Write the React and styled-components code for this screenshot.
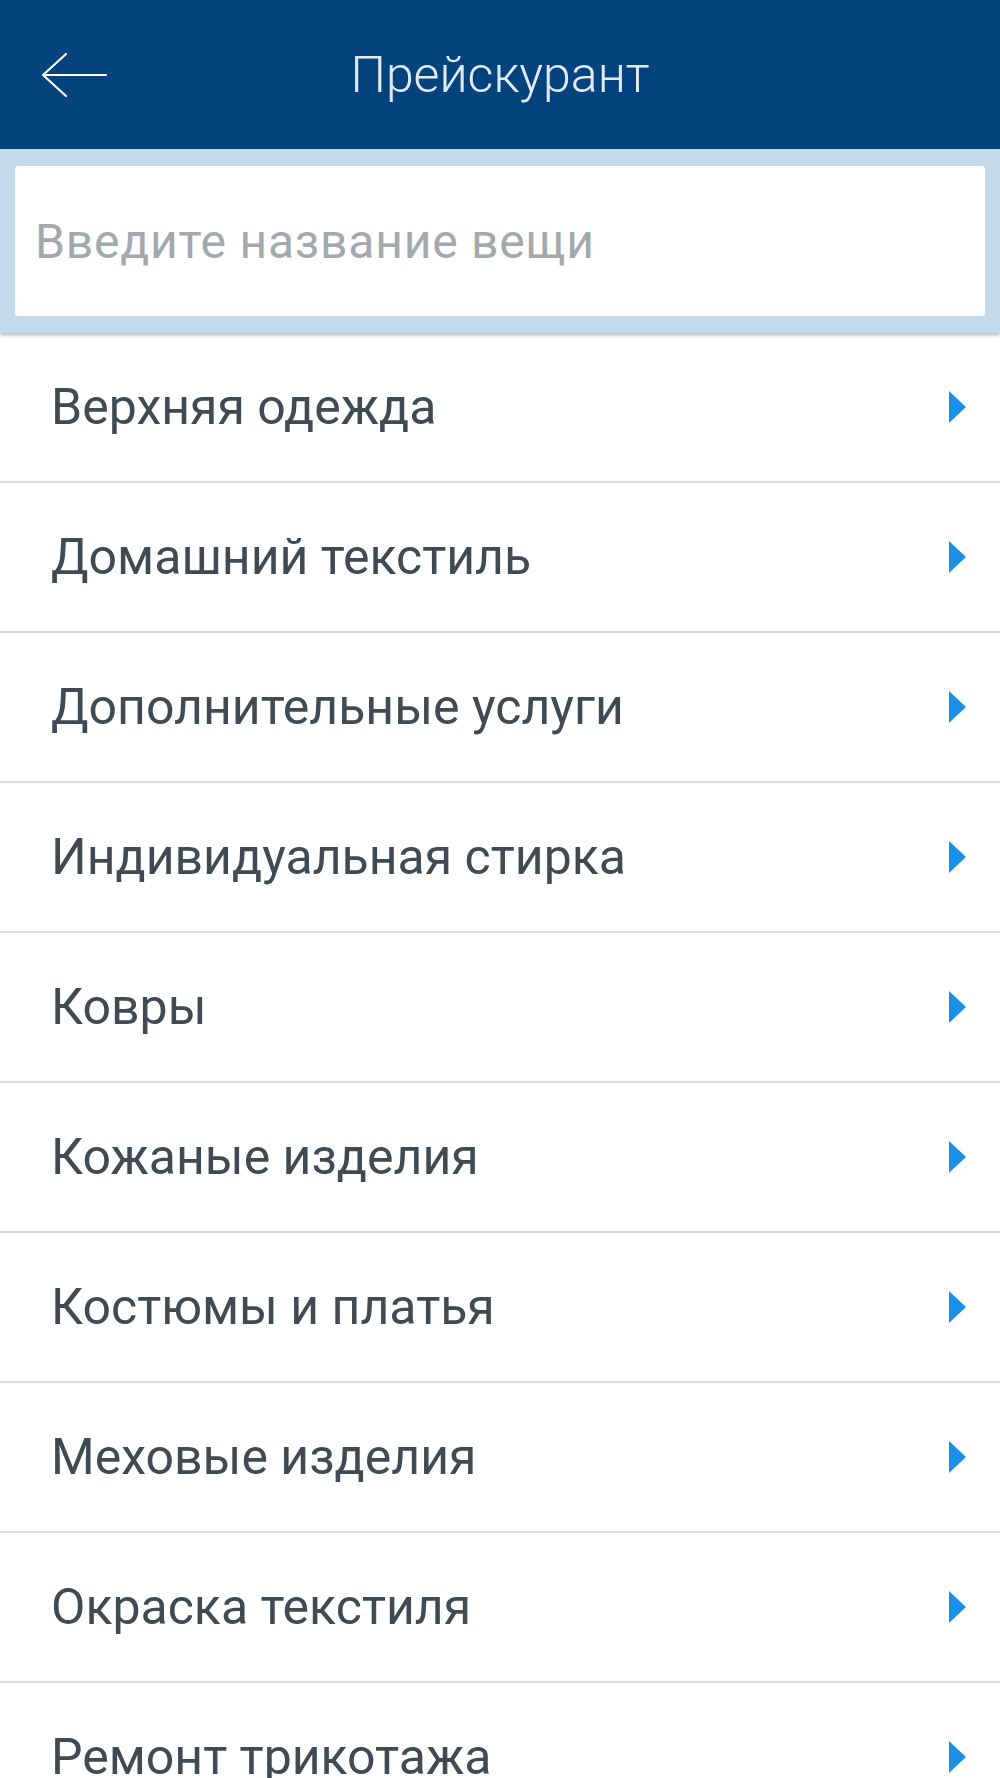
import React from 'react';
import styled, { createGlobalStyle } from 'styled-components';

const categories = [
  'Верхняя одежда',
  'Домашний текстиль',
  'Дополнительные услуги',
  'Индивидуальная стирка',
  'Ковры',
  'Кожаные изделия',
  'Костюмы и платья',
  'Меховые изделия',
  'Окраска текстиля',
  'Ремонт трикотажа',
];

const GlobalStyle = createGlobalStyle`
  html, body {
    margin: 0;
    padding: 0;
    background: #ffffff;
    font-family: Roboto, "Noto Sans", "Liberation Sans", sans-serif;
  }
  * {
    box-sizing: border-box;
  }
`;

const Screen = styled.div`
  width: 1000px;
  height: 1778px;
  overflow: hidden;
  background: #ffffff;
`;

const Header = styled.header`
  height: 149px;
  background: #05437f;
  display: grid;
  grid-template-columns: 1fr auto 1fr;
  align-items: center;
`;

const BackButton = styled.button`
  justify-self: start;
  margin-left: 40px;
  padding: 0;
  border: 0;
  background: none;
  width: 68px;
  height: 46px;
  display: flex;
  align-items: center;
  cursor: pointer;
`;

const Title = styled.h1`
  margin: 0;
  font-size: 50px;
  font-weight: 300;
  color: #e2eaf3;
  line-height: 1;
`;

const SearchBand = styled.div`
  position: relative;
  z-index: 1;
  background: #c3d9ec;
  padding: 17px 15px;
  box-shadow: 0 2px 4px rgba(0, 0, 0, 0.3);
`;

const SearchInput = styled.input`
  display: block;
  width: 100%;
  height: 150px;
  border: 0;
  border-radius: 3px;
  background: #ffffff;
  padding: 0 20px;
  font-family: Roboto, "Noto Sans", sans-serif;
  font-size: 48px;
  letter-spacing: 0.8px;
  color: #3f4a54;
  outline: none;

  &::placeholder {
    color: #a3a8ad;
  }
`;

const List = styled.ul`
  margin: 0;
  padding: 0;
  list-style: none;
`;

const Row = styled.li`
  height: 150px;
  border-bottom: 2px solid #dcdcdc;
  display: flex;
  align-items: center;
  justify-content: space-between;
  padding: 0 34px 0 51px;
  cursor: pointer;
`;

const Label = styled.span`
  font-size: 50px;
  color: #3f4a54;
  line-height: 1;
`;

const BackArrow = () => (
  <svg width="68" height="46" viewBox="0 0 68 46" fill="none">
    <path d="M3 23 H66 M26 2 L3 23 L26 44" stroke="#ffffff" strokeWidth="2.2" strokeLinecap="round" strokeLinejoin="round" />
  </svg>
);

const Chevron = () => (
  <svg width="17" height="32" viewBox="0 0 17 32">
    <path d="M0 0 L17 16 L0 32 Z" fill="#1a8fe8" />
  </svg>
);

export default function App() {
  return (
    <>
      <GlobalStyle />
      <Screen>
        <Header>
          <BackButton aria-label="Назад">
            <BackArrow />
          </BackButton>
          <Title>Прейскурант</Title>
          <span />
        </Header>
        <SearchBand>
          <SearchInput placeholder="Введите название вещи" />
        </SearchBand>
        <List>
          {categories.map((name) => (
            <Row key={name}>
              <Label>{name}</Label>
              <Chevron />
            </Row>
          ))}
        </List>
      </Screen>
    </>
  );
}
